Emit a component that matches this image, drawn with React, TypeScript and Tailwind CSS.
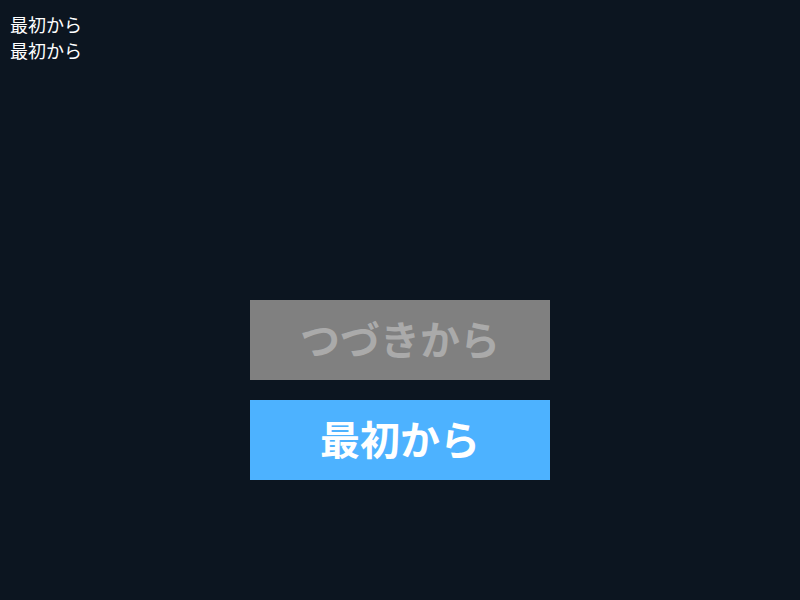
export default function App() {
  return (
    <div
      className="w-[800px] h-[600px] bg-[#0c1520] flex flex-col"
      style={{ fontFamily: '"Noto Sans CJK JP", "Noto Sans", sans-serif' }}
    >
      <div className="pl-[10px] pt-[11px] text-[18px] leading-[26px] text-white">
        <div>最初から</div>
        <div>最初から</div>
      </div>

      <div className="mt-[237px] flex flex-col items-center gap-[20px]">
        <button
          disabled
          className="w-[300px] h-[80px] pb-[4px] bg-[#808080] text-[#aaaaaa] text-[40px] font-bold leading-none flex items-center justify-center"
        >
          つづきから
        </button>
        <button className="w-[300px] h-[80px] pb-[4px] bg-[#4db2ff] text-white text-[40px] font-bold leading-none flex items-center justify-center">
          最初から
        </button>
      </div>
    </div>
  );
}
